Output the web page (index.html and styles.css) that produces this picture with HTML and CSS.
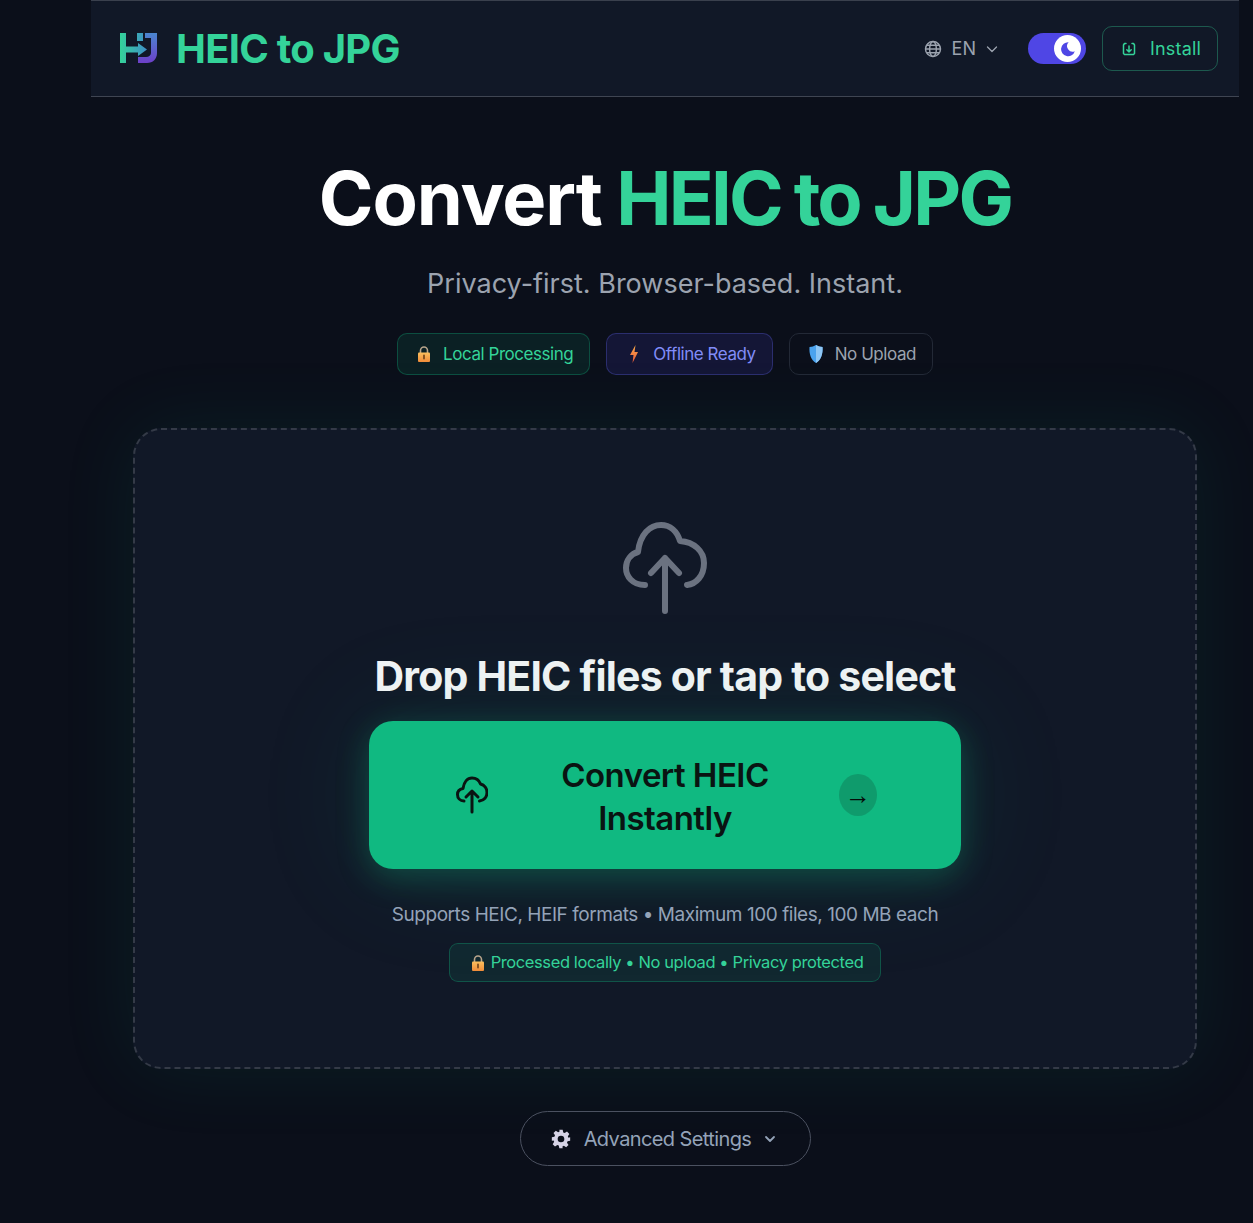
FILE: index.html
```html
<!DOCTYPE html>
<html lang="en">
<head>
  <meta charset="UTF-8" />
  <title>HEIC to JPG</title>
  <link rel="stylesheet" href="styles.css">
</head>
<body>
  <div class="app">
    <header class="header">
      <div class="brand">
        <svg class="logo" viewBox="0 0 38 31" width="38" height="31">
          <defs>
            <linearGradient id="logoH" x1="0" y1="0" x2="1" y2="0"><stop offset="0" stop-color="#34d399"/><stop offset="1" stop-color="#3f8fc8"/></linearGradient>
            <linearGradient id="logoJ" x1="0" y1="0" x2="0" y2="1"><stop offset="0" stop-color="#4a86cf"/><stop offset="1" stop-color="#6d3fc8"/></linearGradient>
            <linearGradient id="lockBody" x1="0" y1="0" x2="0" y2="1"><stop offset="0" stop-color="#fbbf5d"/><stop offset="1" stop-color="#f08c3a"/></linearGradient>
            <linearGradient id="boltFill" x1="0" y1="0" x2="0" y2="1"><stop offset="0" stop-color="#fbae4a"/><stop offset="1" stop-color="#e8553a"/></linearGradient>
          </defs>
          <path d="M0 0h6v30H0zM6 13.500h12V10l9 6.500-9 6.500v-3.500H6zM17 0h6v8h-6z" fill="url(#logoH)"/>
          <path d="M25 0h12v20c0 6-4 10-10 10h-9v-6h8c3 0 5-2 5-4V5h-6z" fill="url(#logoJ)"/>
        </svg>
        <span class="brand-name">HEIC to JPG</span>
      </div>
      <div class="header-actions">
        <div class="lang">
          <svg viewBox="0 0 24 24" width="18" height="18" fill="none" stroke="currentColor" stroke-width="1.900"><circle cx="12" cy="12" r="10"/><ellipse cx="12" cy="12" rx="4.500" ry="10"/><path d="M2 12h20M3.500 7h17M3.500 17h17"/></svg>
          <span>EN</span>
          <svg viewBox="0 0 12 12" width="12" height="12" fill="none" stroke="currentColor" stroke-width="1.300" stroke-linecap="round" stroke-linejoin="round"><path d="M1.500 4l4.500 4.500L10.500 4"/></svg>
        </div>
        <div class="toggle">
          <span class="toggle-knob">
            <svg viewBox="0 0 16 16" width="16" height="16"><path d="M8.600 1.200A7 7 0 1 0 14.800 10.200 5.600 5.600 0 0 1 8.600 1.200z" fill="#4f46e5"/></svg>
          </span>
        </div>
        <button class="install">
          <svg viewBox="0 0 16 16" width="16" height="16" fill="none" stroke="currentColor" stroke-width="1.500" stroke-linecap="round" stroke-linejoin="round"><path d="M5 2.500H3.500L2.500 4v8.500l1 1h9l1-1V4l-1-1.500H11"/><path d="M8 5v6M5.800 8.800L8 11l2.200-2.200"/></svg>
          <span>Install</span>
        </button>
      </div>
    </header>

    <main class="main">
      <h1 class="title">Convert <span class="accent">HEIC to JPG</span></h1>
      <p class="tagline">Privacy-first. Browser-based. Instant.</p>

      <div class="badges">
        <div class="badge badge-green">
          <svg viewBox="0 0 14 16" width="14" height="16"><path d="M3.500 7V4.500a3.500 3.500 0 0 1 7 0V7" fill="none" stroke="#b9a58c" stroke-width="1.600"/><rect x="1" y="6.500" width="12" height="9.500" rx="1" fill="url(#lockBody)"/><path d="M7 9.500v3" stroke="#7a4a1c" stroke-width="1.800" stroke-linecap="round"/></svg>
          Local Processing
        </div>
        <div class="badge badge-indigo">
          <svg viewBox="0 0 12 18" width="12" height="18"><path d="M7.500 0L2 10h3.500l-1 8L10 7H6.500z" fill="url(#boltFill)"/></svg>
          Offline Ready
        </div>
        <div class="badge badge-gray">
          <svg viewBox="0 0 14 18" width="14" height="18"><path d="M7 0c2 1.300 4 2 6.500 2 .5 7-1.500 13-6.500 16C2 15 0 9 .500 2 3 2 5 1.300 7 0z" fill="#4ba3ee"/><path d="M7 0c2 1.300 4 2 6.500 2 .5 7-1.500 13-6.500 16z" fill="#8fc7f5"/></svg>
          No Upload
        </div>
      </div>

      <section class="dropzone">
        <svg class="cloud" viewBox="0 0 86 96" width="86" height="96" fill="none" stroke="currentColor" stroke-width="6" stroke-linecap="round" stroke-linejoin="round">
          <path d="M23 66C10 66 4 57 4 49C4 41 9 35 16 33C18 15 28 6 39 6C48 6 55 12 58 22C72 23 82 32 82 44C82 57 74 65 65 66"/>
          <path d="M43 92V39M29 54l14-15 14 15"/>
        </svg>
        <h2 class="drop-title">Drop HEIC files or tap to select</h2>
        <button class="convert">
          <svg class="convert-icon" viewBox="0 0 32 38" width="32" height="38" fill="none" stroke="currentColor" stroke-width="3" stroke-linecap="round" stroke-linejoin="round">
            <path d="M8 25C4 25 1.500 22 1.500 18.500S4 13 7 12.500C8 6 11.500 2 16 2c4 0 7 2 8.500 6 4 1 6.500 4.500 6.500 8.500 0 4.500-3 8-7.500 8.500"/>
            <path d="M16 36V15M10 21l6-6 6 6"/>
          </svg>
          <span class="convert-label">Convert HEIC Instantly</span>
          <span class="convert-arrow">→</span>
        </button>
        <p class="supports">Supports HEIC, HEIF formats • Maximum 100 files, 100 MB each</p>
        <div class="privacy">
          <svg viewBox="0 0 14 16" width="14" height="16"><path d="M3.500 7V4.500a3.500 3.500 0 0 1 7 0V7" fill="none" stroke="#b9a58c" stroke-width="1.600"/><rect x="1" y="6.500" width="12" height="9.500" rx="1" fill="url(#lockBody)"/><path d="M7 9.500v3" stroke="#7a4a1c" stroke-width="1.800" stroke-linecap="round"/></svg>
          Processed locally • No upload • Privacy protected
        </div>
      </section>

      <button class="advanced">
        <svg viewBox="0 0 24 24" width="20" height="20"><path fill="#d6d3e6" fill-rule="evenodd" d="M10 1h4l.7 3.200 1.700.7 2.800-1.800 2.800 2.800-1.800 2.800.7 1.700L23 10v4l-3.100.7-.7 1.700 1.800 2.800-2.800 2.800-2.800-1.800-1.700.7L14 23h-4l-.7-3.100-1.700-.7-2.800 1.800-2.800-2.800 1.800-2.800-.7-1.700L1 14v-4l3.100-.7.7-1.700-1.800-2.800 2.800-2.800 2.800 1.800 1.700-.7zM12 8a4 4 0 1 0 0 8 4 4 0 0 0 0-8z"/></svg>
        <span>Advanced Settings</span>
        <svg viewBox="0 0 12 12" width="12" height="12" fill="none" stroke="currentColor" stroke-width="1.800" stroke-linecap="round" stroke-linejoin="round"><path d="M2 4l4 4 4-4"/></svg>
      </button>
    </main>
  </div>
</body>
</html>
```

FILE: styles.css
```css
* {
  margin: 0;
  padding: 0;
  box-sizing: border-box;
  font-family: 'Inter', 'Noto Sans', sans-serif;
}

body {
  background: #0b0f1a;
  min-height: 100vh;
  padding: 0 14px 0 91px;
  overflow: hidden;
}

button {
  background: none;
  border: none;
  cursor: pointer;
}

.app {
  width: 1148px;
}

.header {
  height: 97px;
  background: #111827;
  border-top: 1px solid #3a404d;
  border-bottom: 1px solid #3f4552;
  display: flex;
  align-items: center;
  justify-content: space-between;
  padding: 0 21px 0 29px;
}

.brand {
  display: flex;
  align-items: center;
  gap: 18px;
}

.brand-name {
  font-size: 40px;
  font-weight: 700;
  letter-spacing: -0.750px;
  color: #34d399;
}

.header-actions {
  display: flex;
  align-items: center;
}

.lang {
  display: flex;
  align-items: center;
  gap: 10px;
  color: #9ca3af;
  font-size: 18px;
  margin-right: 30px;
}

.toggle {
  width: 58px;
  height: 31px;
  border-radius: 16px;
  background: #4f46e5;
  display: flex;
  align-items: center;
  justify-content: flex-end;
  padding-right: 5px;
  margin-right: 16px;
}

.toggle-knob {
  width: 27px;
  height: 27px;
  border-radius: 50%;
  background: #fff;
  display: flex;
  align-items: center;
  justify-content: center;
}

.install {
  width: 116px;
  height: 45px;
  padding-left: 2px;
  border: 1px solid rgba(52, 211, 153, 0.35);
  border-radius: 10px;
  color: #34d399;
  font-size: 18px;
  letter-spacing: 0.200px;
  display: flex;
  align-items: center;
  justify-content: center;
  gap: 13px;
}

.main {
  display: flex;
  flex-direction: column;
  align-items: center;
  padding: 0 42px;
}

.title {
  margin-top: 55px;
  font-size: 74px;
  line-height: 92px;
  font-weight: 700;
  letter-spacing: -1.100px;
  word-spacing: -2px;
  color: #fff;
}

.accent {
  color: #34d399;
  letter-spacing: -2.750px;
}

.tagline {
  margin-top: 23px;
  font-size: 27px;
  line-height: 34px;
  color: #9ca3af;
}

.badges {
  display: flex;
  gap: 16px;
  margin-top: 32px;
}

.badge {
  height: 42px;
  display: flex;
  align-items: center;
  gap: 12px;
  padding: 0 16px 0 19px;
  border-radius: 10px;
  border: 1px solid;
  font-size: 17px;
  letter-spacing: -0.450px;
}

.badge-green {
  color: #34d399;
  background: rgba(16, 185, 129, 0.1);
  border-color: rgba(16, 185, 129, 0.3);
}

.badge-indigo {
  color: #818cf8;
  background: rgba(79, 70, 229, 0.14);
  border-color: rgba(99, 102, 241, 0.3);
  padding-left: 21px;
  gap: 13px;
}

.badge-gray {
  color: #9ca3af;
  border-color: #232936;
}

.dropzone {
  width: 1064px;
  height: 641px;
  margin-top: 53px;
  border: 2px dashed #343a47;
  border-radius: 28px;
  background: #111827;
  box-shadow: 0 0 80px rgba(16, 185, 129, 0.09);
  display: flex;
  flex-direction: column;
  align-items: center;
  padding-top: 89px;
}

.cloud {
  color: #6b7280;
}

.drop-title {
  margin-top: 35px;
  font-size: 41px;
  line-height: 52px;
  font-weight: 700;
  letter-spacing: -0.800px;
  color: #f3f4f6;
}

.convert {
  width: 592px;
  height: 148px;
  margin-top: 19px;
  border-radius: 24px;
  background: #10b981;
  box-shadow: 0 8px 32px rgba(16, 185, 129, 0.3), 0 0 120px rgba(16, 185, 129, 0.12);
  color: #0a1412;
  display: flex;
  align-items: center;
  justify-content: space-between;
  padding: 0 84px 0 87px;
}

.convert-label {
  width: 300px;
  margin: 3px 0 0 3px;
  font-size: 33px;
  line-height: 43px;
  font-weight: 600;
  letter-spacing: -0.550px;
  text-align: center;
  color: #0a1412;
}

.convert-arrow {
  width: 38px;
  height: 42px;
  border-radius: 50%;
  background: rgba(10, 20, 18, 0.18);
  display: flex;
  align-items: center;
  justify-content: center;
  font-family: 'Liberation Sans', sans-serif;
  font-size: 26px;
  line-height: 1;
  color: #050a08;
}

.supports {
  margin-top: 33px;
  font-size: 19px;
  line-height: 26px;
  letter-spacing: -0.450px;
  color: #94a3b8;
}

.privacy {
  height: 39px;
  margin-top: 15px;
  display: flex;
  align-items: center;
  gap: 6px;
  padding: 0 17px 0 21px;
  border-radius: 9px;
  border: 1px solid rgba(16, 185, 129, 0.3);
  background: rgba(16, 185, 129, 0.1);
  color: #34d399;
  font-size: 16.500px;
  line-height: 37px;
  letter-spacing: -0.400px;
}

.advanced {
  width: 291px;
  height: 55px;
  margin-top: 42px;
  padding-right: 3px;
  border-radius: 28px;
  border: 1px solid #4b5160;
  color: #94a3b8;
  font-size: 20px;
  display: flex;
  align-items: center;
  justify-content: center;
  gap: 13px;
}

.advanced span {
  letter-spacing: -0.600px;
}
```
